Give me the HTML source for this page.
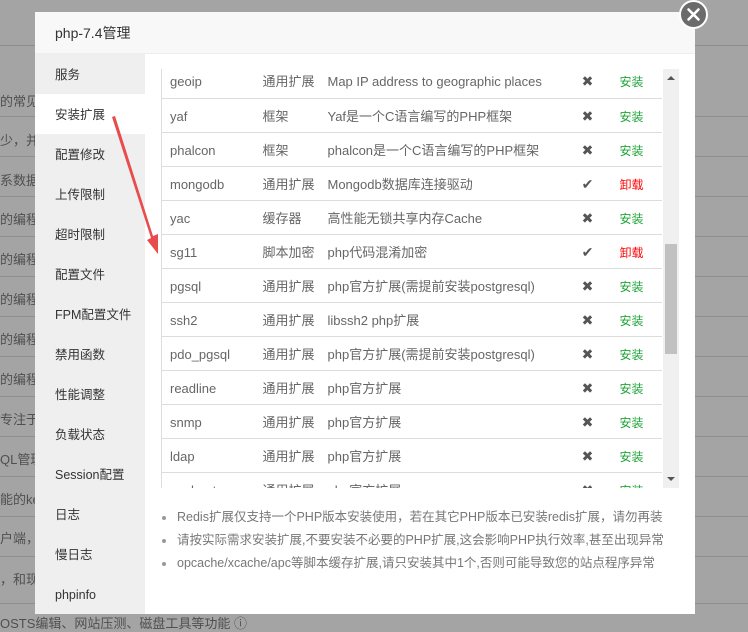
<!DOCTYPE html>
<html><head><meta charset="utf-8"><style>
*{margin:0;padding:0;box-sizing:border-box}
body{width:748px;height:628px;overflow:hidden;background:#a4a4a4;font-family:"Liberation Sans","Noto Sans CJK SC",sans-serif;font-size:13px;color:#666;position:relative}
.bgl{position:absolute;left:0;width:748px;height:1px;background:#8e8e8e}
.bgt{position:absolute;left:0;color:#333;font-size:13px;opacity:.75}
.dlg{position:absolute;left:35px;top:12px;width:660px;height:602px;background:#fff}
.hd{height:42px;background:#f8f8f8;border-bottom:1px solid #eee;padding-left:20px;line-height:42px;font-size:14px;color:#333}
.sb{position:absolute;left:0;top:42px;width:110px;height:560px;background:#efefef}
.sb div{height:40px;line-height:42px;padding-left:20px;color:#333;font-size:12.5px}
.sb .on{background:#fff}
.tw{position:absolute;left:126px;top:57px;width:518px;height:419px;overflow:hidden}
table{border-collapse:collapse;width:501px;border-left:1px solid #ddd;margin-top:-5px}
td{height:34px;border-bottom:1px solid #ddd;padding:9px 0 0 0;white-space:nowrap;vertical-align:baseline;line-height:16px}
td.n{padding-left:8px;width:101px}td.t{width:65px}td.d{width:240px}td.s{width:40px;text-align:center;font-size:14px;color:#555}
td.a{padding-left:12px;color:#20a53a;font-size:12px}
td.a.r{color:#f00}
.scr{position:absolute;left:502px;top:0;width:16px;height:419px;background:#f0f0f0}
.th{position:absolute;left:2px;top:175px;width:12px;height:110px;background:#c1c1c1}
ul{position:absolute;left:127px;top:494px;list-style:none}
li{height:23px;line-height:23px;font-size:12.5px;color:#777;padding-left:15px;position:relative}
li:before{content:"";position:absolute;left:0;top:10px;width:4px;height:4px;border-radius:50%;background:#999}
.cl{position:absolute;left:679px;top:0;width:29px;height:29px;border-radius:50%;background:#6b6b6b;border:2px solid #fff}
</style></head><body>
<div class="bgl" style="top:45px"></div><div class="bgl" style="top:116px"></div><div class="bgl" style="top:156px"></div><div class="bgl" style="top:196px"></div><div class="bgl" style="top:236px"></div><div class="bgl" style="top:276px"></div><div class="bgl" style="top:316px"></div><div class="bgl" style="top:356px"></div><div class="bgl" style="top:396px"></div><div class="bgl" style="top:436px"></div><div class="bgl" style="top:476px"></div><div class="bgl" style="top:516px"></div><div class="bgl" style="top:556px"></div><div class="bgl" style="top:603px"></div>
<div class="bgt" style="top:91px">的常见</div><div class="bgt" style="top:130px">少，并</div><div class="bgt" style="top:170px">系数据库</div><div class="bgt" style="top:209px">的编程</div><div class="bgt" style="top:249px">的编程</div><div class="bgt" style="top:289px">的编程</div><div class="bgt" style="top:329px">的编程</div><div class="bgt" style="top:369px">的编程</div><div class="bgt" style="top:409px">专注于科</div><div class="bgt" style="top:449px">QL管理工</div><div class="bgt" style="top:489px">能的key</div><div class="bgt" style="top:528px">户端，</div><div class="bgt" style="top:569px">，和现</div><div class="bgt" style="top:613px">OSTS编辑、网站压测、磁盘工具等功能 ⓘ</div>
<div class="dlg">
<div class="hd">php-7.4管理</div>
<div class="sb"><div>服务</div><div class="on">安装扩展</div><div>配置修改</div><div>上传限制</div><div>超时限制</div><div>配置文件</div><div>FPM配置文件</div><div>禁用函数</div><div>性能调整</div><div>负载状态</div><div>Session配置</div><div>日志</div><div>慢日志</div><div>phpinfo</div></div>
<div class="tw"><table>
<tr><td class="n">geoip</td><td class="t">通用扩展</td><td class="d">Map IP address to geographic places</td><td class="s">✖</td><td class="a">安装</td></tr>
<tr><td class="n">yaf</td><td class="t">框架</td><td class="d">Yaf是一个C语言编写的PHP框架</td><td class="s">✖</td><td class="a">安装</td></tr>
<tr><td class="n">phalcon</td><td class="t">框架</td><td class="d">phalcon是一个C语言编写的PHP框架</td><td class="s">✖</td><td class="a">安装</td></tr>
<tr><td class="n">mongodb</td><td class="t">通用扩展</td><td class="d">Mongodb数据库连接驱动</td><td class="s">✔</td><td class="a r">卸载</td></tr>
<tr><td class="n">yac</td><td class="t">缓存器</td><td class="d">高性能无锁共享内存Cache</td><td class="s">✖</td><td class="a">安装</td></tr>
<tr><td class="n">sg11</td><td class="t">脚本加密</td><td class="d">php代码混淆加密</td><td class="s">✔</td><td class="a r">卸载</td></tr>
<tr><td class="n">pgsql</td><td class="t">通用扩展</td><td class="d">php官方扩展(需提前安装postgresql)</td><td class="s">✖</td><td class="a">安装</td></tr>
<tr><td class="n">ssh2</td><td class="t">通用扩展</td><td class="d">libssh2 php扩展</td><td class="s">✖</td><td class="a">安装</td></tr>
<tr><td class="n">pdo_pgsql</td><td class="t">通用扩展</td><td class="d">php官方扩展(需提前安装postgresql)</td><td class="s">✖</td><td class="a">安装</td></tr>
<tr><td class="n">readline</td><td class="t">通用扩展</td><td class="d">php官方扩展</td><td class="s">✖</td><td class="a">安装</td></tr>
<tr><td class="n">snmp</td><td class="t">通用扩展</td><td class="d">php官方扩展</td><td class="s">✖</td><td class="a">安装</td></tr>
<tr><td class="n">ldap</td><td class="t">通用扩展</td><td class="d">php官方扩展</td><td class="s">✖</td><td class="a">安装</td></tr>
<tr><td class="n">enchant</td><td class="t">通用扩展</td><td class="d">php官方扩展</td><td class="s">✖</td><td class="a">安装</td></tr>
</table>
<div class="scr"><div style="position:absolute;left:4px;top:7px;border:4px solid transparent;border-bottom:4px solid #555;border-top:0"></div><div class="th"></div><div style="position:absolute;left:4px;top:408px;border:4px solid transparent;border-top:4px solid #555;border-bottom:0"></div></div>
</div>
<ul><li>Redis扩展仅支持一个PHP版本安装使用，若在其它PHP版本已安装redis扩展，请勿再装</li><li>请按实际需求安装扩展,不要安装不必要的PHP扩展,这会影响PHP执行效率,甚至出现异常</li><li>opcache/xcache/apc等脚本缓存扩展,请只安装其中1个,否则可能导致您的站点程序异常</li></ul>
</div>
<div class="cl"><svg width="25" height="25" style="position:absolute;left:0;top:0"><path d="M7.5 7.5L17.5 17.5M17.5 7.5L7.5 17.5" stroke="#fff" stroke-width="2.6" stroke-linecap="round"/></svg></div>
<svg style="position:absolute;left:0;top:0" width="748" height="628"><polygon points="112,117 115,116 153,236 158,234 158,254 147,240 151,238" fill="#e84c4c"/></svg>
</body></html>
